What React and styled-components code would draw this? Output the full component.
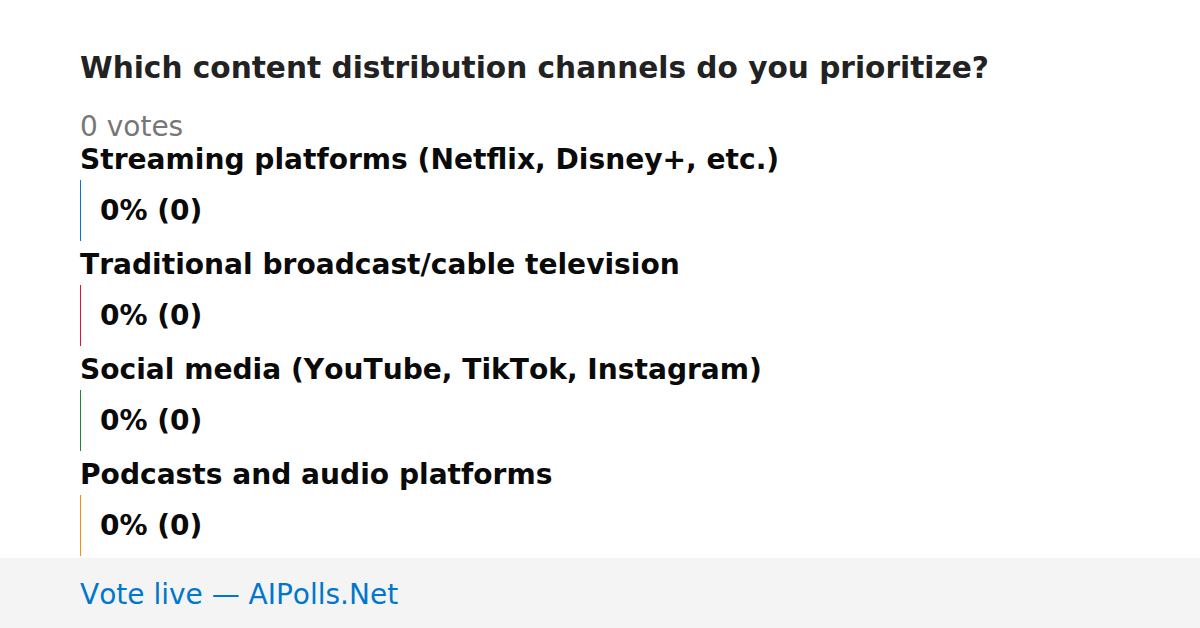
import React from "react";
import styled, { createGlobalStyle } from "styled-components";

const GlobalStyle = createGlobalStyle`
  html, body {
    margin: 0;
    padding: 0;
    background: #ffffff;
    font-family: "DejaVu Sans", "Liberation Sans", sans-serif;
    font-kerning: none;
  }
`;

const Page = styled.div`
  width: 1200px;
  height: 628px;
  display: flex;
  flex-direction: column;
  overflow: hidden;
`;

const Main = styled.div`
  flex: 1;
  min-height: 0;
  padding: 51px 80px 0;
  display: flex;
  flex-direction: column;
`;

const Title = styled.h1`
  margin: 0;
  font-size: 29.6px;
  font-weight: bold;
  color: #222222;
  line-height: 35px;
`;

const Votes = styled.div`
  margin-top: 24px;
  font-size: 28px;
  color: #777777;
  line-height: 33px;
`;

const Option = styled.div`
  display: flex;
  flex-direction: column;
  margin-bottom: 7px;

  &:last-child {
    margin-bottom: 0;
  }
`;

const Label = styled.div`
  font-size: 28.1px;
  font-weight: bold;
  color: #0a0a0a;
  line-height: 33px;
`;

const Bar = styled.div`
  margin-top: 4px;
  height: 61px;
  border-left: 1px solid ${p => p.color};
  display: flex;
  align-items: center;
  padding-left: 19px;
  font-size: 28px;
  font-weight: bold;
  color: #0a0a0a;
`;

const Footer = styled.div`
  flex-shrink: 0;
  height: 70px;
  box-sizing: border-box;
  padding: 3px 80px 0;
  background: #f4f4f4;
  display: flex;
  align-items: center;
  font-size: 28px;
  color: #0077cc;
`;

const options = [
  { label: "Streaming platforms (Netflix, Disney+, etc.)", color: "#0a74d0" },
  { label: "Traditional broadcast/cable television", color: "#dc143c" },
  { label: "Social media (YouTube, TikTok, Instagram)", color: "#1a8a3a" },
  { label: "Podcasts and audio platforms", color: "#ff8c00" },
];

const App = () => {
  return (
    <Page>
      <GlobalStyle />
      <Main>
        <Title>Which content distribution channels do you prioritize?</Title>
        <Votes>0 votes</Votes>
        {options.map((o, i) => (
          <Option key={i}>
            <Label>{o.label}</Label>
            <Bar color={o.color}>0% (0)</Bar>
          </Option>
        ))}
      </Main>
      <Footer>Vote live — AIPolls.Net</Footer>
    </Page>
  );
};

export default App;
